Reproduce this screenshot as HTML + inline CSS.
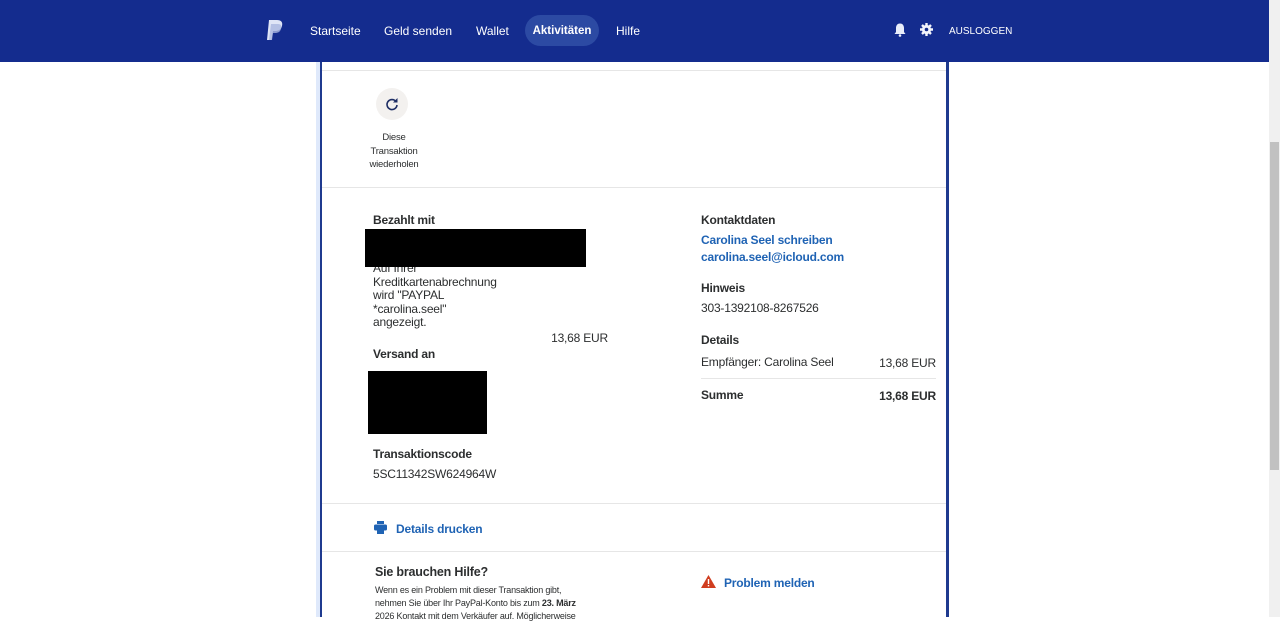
<!DOCTYPE html>
<html><head><meta charset="utf-8"><style>
*{margin:0;padding:0;box-sizing:border-box}
body{width:1280px;height:617px;overflow:hidden;background:#fff;font-family:"Liberation Sans",sans-serif;position:relative;color:#2c2e2f}
.nav{position:absolute;left:0;top:0;width:1269px;height:62px;background:#142c8e}
.nav a{position:absolute;top:15px;height:31px;line-height:31px;color:#fff;font-size:12px;text-decoration:none}
.sb{position:absolute;left:1269px;top:0;width:11px;height:617px;background:#f0f0f0}
.thumb{position:absolute;left:1270px;top:142px;width:9px;height:328px;background:#c1c1c1}
.lb{position:absolute;left:316px;top:62px;width:4px;height:555px;background:#dfe9fb}
.lb2{position:absolute;left:320px;top:62px;width:2px;height:555px;background:#1f3a8f}
.rb{position:absolute;left:946px;top:62px;width:3px;height:555px;background:#1f3a8f}
.hl{position:absolute;left:322px;width:624px;height:1px;background:#e6e6e6}
.t{position:absolute;font-size:12px;white-space:nowrap;letter-spacing:-0.2px}
.r{text-align:right}
.b{font-weight:bold}
.blue{color:#1f63b4;font-weight:bold}
.blk{position:absolute;background:#000}
</style></head><body>
<div class="nav">
<svg style="position:absolute;left:266px;top:20px" width="18" height="21" viewBox="0 0 18 21"><path d="M3 0h8c4 0 6 2 5 6-1 4-4 5-7 5H7l-1.5 9H1z" fill="#dfe5f6"/><path d="M5 4h7c3 0 4 2 3 5-1 3-3 4-6 4H7l-1 7H3z" fill="#a9b7e0" opacity=".8"/></svg>
<a style="left:310px;top:16px">Startseite</a>
<a style="left:384px;top:16px">Geld senden</a>
<a style="left:476px;top:16px">Wallet</a>
<a style="left:525px;width:74px;text-align:center;background:#2c4aa3;border-radius:16px;font-weight:bold;font-size:11.5px;line-height:33px">Aktivitäten</a>
<a style="left:616px;top:16px">Hilfe</a>
<svg style="position:absolute;left:894px;top:23px" width="12" height="14" viewBox="0 0 12 14"><path d="M6 0.5C3 0.5 2 3 2 5v4L0.5 11h11L10 9V5c0-2-1-4.5-4-4.5z" fill="#e9eefb"/><circle cx="6" cy="12.5" r="1.3" fill="#e9eefb"/></svg>
<svg style="position:absolute;left:920px;top:23px" width="13" height="13" viewBox="0 0 13 13"><circle cx="6.5" cy="6.5" r="4.6" fill="#f2f4fb"/><g stroke="#f2f4fb" stroke-width="2.4"><path d="M6.5 0v13M0 6.5h13M2 2l9 9M11 2l-9 9"/></g><circle cx="6.5" cy="6.5" r="1.8" fill="#142c8e"/></svg>
<a style="left:949px;top:16px;font-size:10px">AUSLOGGEN</a>
</div>
<div class="sb"></div><div class="thumb"></div>
<div class="lb"></div><div class="lb2"></div><div class="rb"></div>
<div class="hl" style="top:70px"></div>
<div class="hl" style="top:187px"></div>
<div class="hl" style="top:503px"></div>
<div class="hl" style="top:551px"></div>
<div style="position:absolute;left:376px;top:88px;width:32px;height:32px;border-radius:50%;background:#f3f1ef"></div>
<svg style="position:absolute;left:385px;top:97px" width="14" height="14" viewBox="0 0 14 14"><path d="M11 4.5A5 5 0 1 0 12 8" fill="none" stroke="#1d2d64" stroke-width="1.6"/><path d="M12.5 1v4.5H8z" fill="#1d2d64"/></svg>
<div class="t" style="left:360px;top:131px;width:68px;text-align:center;font-size:9.5px;line-height:13.5px;white-space:normal">Diese Transaktion wiederholen</div>
<div class="t b" style="left:373px;top:213px">Bezahlt mit</div>
<div class="t" style="left:373px;top:262px;line-height:13.5px">Auf Ihrer<br>Kreditkartenabrechnung<br>wird "PAYPAL<br>*carolina.seel"<br>angezeigt.</div>
<div class="blk" style="left:365px;top:229px;width:221px;height:38px"></div>
<div class="t r" style="left:508px;width:100px;top:331px">13,68 EUR</div>
<div class="t b" style="left:373px;top:347px">Versand an</div>
<div class="blk" style="left:368px;top:371px;width:119px;height:63px"></div>
<div class="t b" style="left:373px;top:447px">Transaktionscode</div>
<div class="t" style="left:373px;top:467px">5SC11342SW624964W</div>
<div class="t b" style="left:701px;top:213px">Kontaktdaten</div>
<div class="t blue" style="left:701px;top:233px">Carolina Seel schreiben</div>
<div class="t blue" style="left:701px;top:250px">carolina.seel@icloud.com</div>
<div class="t b" style="left:701px;top:281px">Hinweis</div>
<div class="t" style="left:701px;top:301px">303-1392108-8267526</div>
<div class="t b" style="left:701px;top:333px">Details</div>
<div class="t" style="left:701px;top:355px">Empfänger: Carolina Seel</div>
<div class="t r" style="left:836px;width:100px;top:356px">13,68 EUR</div>
<div style="position:absolute;left:701px;top:378px;width:235px;height:1px;background:#e6e6e6"></div>
<div class="t b" style="left:701px;top:388px">Summe</div>
<div class="t b r" style="left:836px;width:100px;top:389px">13,68 EUR</div>
<svg style="position:absolute;left:374px;top:521px" width="13" height="13" viewBox="0 0 13 13"><rect x="3" y="0" width="7" height="3" fill="#1f63b4"/><rect x="0" y="3.5" width="13" height="6" rx="1.5" fill="#1f63b4"/><rect x="3" y="8" width="7" height="5" fill="#1f63b4"/></svg>
<div class="t blue" style="left:396px;top:522px">Details drucken</div>
<div class="t b" style="left:375px;top:565px;font-size:12.5px">Sie brauchen Hilfe?</div>
<div class="t" style="left:375px;top:584px;font-size:9px;line-height:13px">Wenn es ein Problem mit dieser Transaktion gibt,<br>nehmen Sie über Ihr PayPal-Konto bis zum <b>23. März</b><br>2026 Kontakt mit dem Verkäufer auf. Möglicherweise</div>
<svg style="position:absolute;left:701px;top:575px" width="15" height="13" viewBox="0 0 15 13"><path d="M7.5 0L15 13H0z" fill="#d03d1f"/><rect x="6.8" y="4" width="1.4" height="5" fill="#fff"/><rect x="6.8" y="10" width="1.4" height="1.4" fill="#fff"/></svg>
<div class="t blue" style="left:724px;top:576px">Problem melden</div>
</body></html>
